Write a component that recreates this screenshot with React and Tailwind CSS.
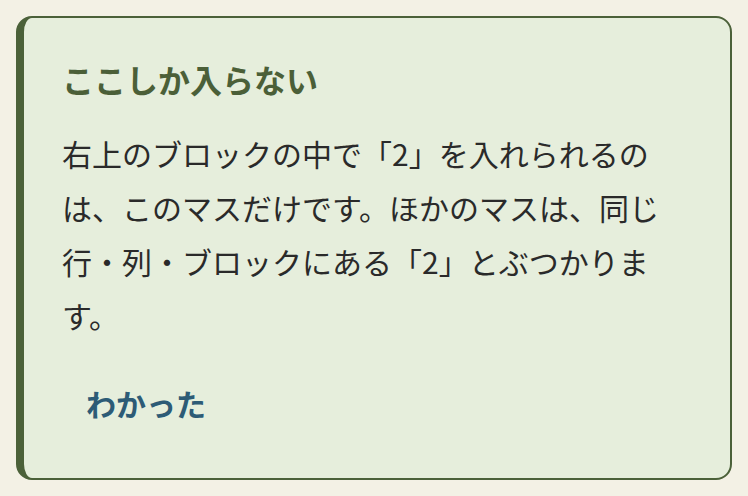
import React from "react";

export default function App() {
  return (
    <div
      className="min-h-screen bg-[#f3f1e5] p-4"
      style={{ fontFamily: '"Noto Sans CJK JP", "Noto Sans", sans-serif' }}
    >
      <div className="rounded-2xl border-2 border-l-8 border-[#4b6139] bg-[#e6eedc] pt-10 pr-10 pb-[47px] pl-[38px]">
        <h2 className="text-[32px] leading-[42px] font-bold text-[#4b5f38]">
          ここしか入らない
        </h2>

        <p className="mt-[26px] max-w-[608px] text-[30px] leading-[54px] text-[#2a2a2a]">
          右上のブロックの中で「2」を入れられるのは、このマスだけです。ほかのマスは、同じ行・列・ブロックにある「2」とぶつかります。
        </p>

        <button className="mt-[33px] rounded-lg px-6 py-2 text-[30px] leading-[40px] font-bold text-[#2d5b76]">
          わかった
        </button>
      </div>
    </div>
  );
}
